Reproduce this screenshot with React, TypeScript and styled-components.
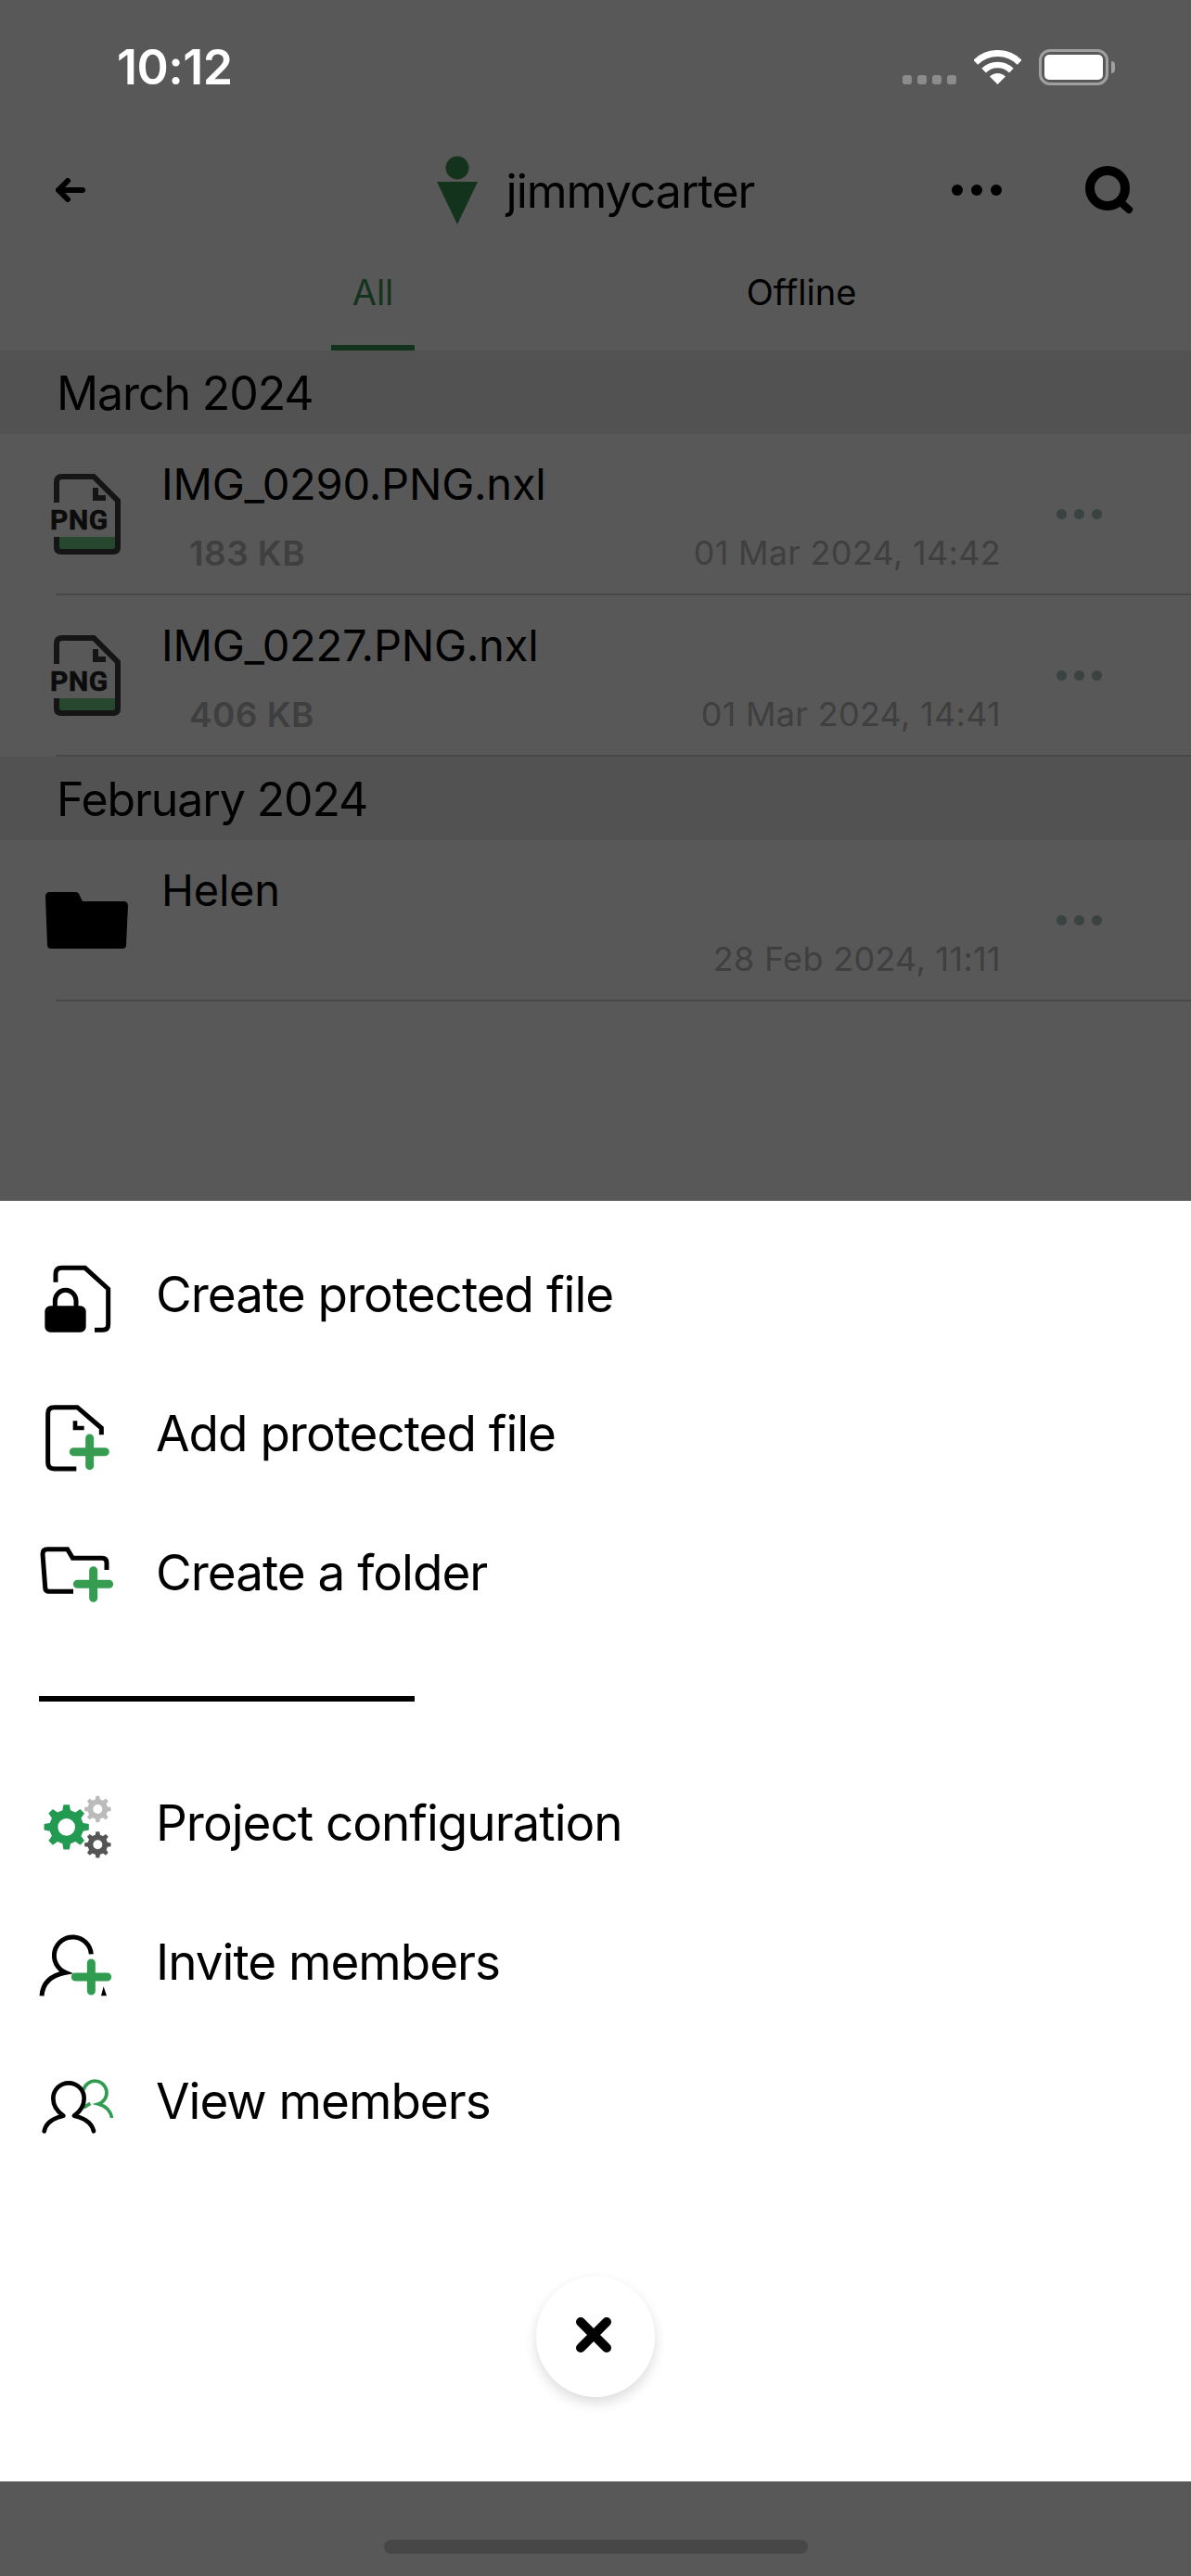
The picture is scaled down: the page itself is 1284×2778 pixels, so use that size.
import styled, { createGlobalStyle } from 'styled-components';

const GlobalStyle = createGlobalStyle`
  html, body {
    margin: 0;
    padding: 0;
    background: #585858;
  }
  * {
    box-sizing: border-box;
  }
`;

const fontStack = `Inter, "Liberation Sans", sans-serif`;

// builds a cog outline, the three gears only differ by centre and size
function gearPath(cx: number, cy: number, outer: number, hole: number) {
  const teeth = 8;
  const inner = outer * 0.76;
  const step = (Math.PI * 2) / teeth;
  let d = '';
  for (let i = 0; i < teeth; i++) {
    const a = i * step - Math.PI / 2;
    const pts: [number, number][] = [
      [inner, a - step * 0.3],
      [outer, a - step * 0.17],
      [outer, a + step * 0.17],
      [inner, a + step * 0.3],
    ];
    pts.forEach(([r, t]) => {
      d += `${d ? 'L' : 'M'}${(cx + r * Math.cos(t)).toFixed(1)} ${(cy + r * Math.sin(t)).toFixed(1)} `;
    });
  }
  d += 'Z ';
  d += `M${cx + hole} ${cy} A${hole} ${hole} 0 1 0 ${cx - hole} ${cy} A${hole} ${hole} 0 1 0 ${cx + hole} ${cy} Z`;
  return d;
}

const files = [
  {
    month: 'March 2024',
    rows: [
      { name: 'IMG_0290.PNG.nxl', size: '183 KB', date: '01 Mar 2024, 14:42', kind: 'png' },
      { name: 'IMG_0227.PNG.nxl', size: '406 KB', date: '01 Mar 2024, 14:41', kind: 'png' },
    ],
  },
  {
    month: 'February 2024',
    rows: [{ name: 'Helen', size: '', date: '28 Feb 2024, 11:11', kind: 'folder' }],
  },
];

const PngIcon = () => (
  <FileGlyph viewBox="54 0 76 87" width="76" height="87">
    <path d="M60 68 V80 Q60 84 64 84 H124 Q127 84 127 80 V68 Z" fill="#27472f" />
    <path
      d="M61 31 V9 Q61 3 67 3 H101 L127 29 V79 Q127 84 122 84 H66 Q61 84 61 79 V68"
      fill="none"
      stroke="#151515"
      strokeWidth="6"
    />
    <path d="M103 15 V26 H114" fill="none" stroke="#151515" strokeWidth="6" />
    <PngLabel x="54" y="60">PNG</PngLabel>
  </FileGlyph>
);

const FolderIcon = () => (
  <FolderGlyph viewBox="0 0 89 61" width="89" height="61">
    <path
      d="M0 5 Q0 0 5 0 H32 Q36 0 37 4 L40 10 H84 Q89 10 89 15 L87 57 Q87 61 83 61 H6 Q2 61 2 57 Z"
      fill="#000"
    />
  </FolderGlyph>
);

const menuTop = [
  {
    label: 'Create protected file',
    box: '90 18 300 300',
    art: (
      <>
        <path d="M180 128 V102 Q180 82 200 82 H275 L350 150 V265 Q350 283 332 283 H306" fill="none" stroke="#000" strokeWidth="15" />
        <path d="M178 212 V188 A34 34 0 0 1 246 188 V212" fill="none" stroke="#000" strokeWidth="15" />
        <rect x="145" y="205" width="133" height="85" rx="18" fill="#000" />
      </>
    ),
  },
  {
    label: 'Add protected file',
    box: '90 468 300 300',
    art: (
      <>
        <path d="M247 732 H175 Q155 732 155 712 V553 Q155 533 175 533 H250 L328 600 V622" fill="none" stroke="#000" strokeWidth="15" />
        <path d="M243 577 V600 H272" fill="none" stroke="#000" strokeWidth="14" />
        <path d="M290 633 V722 M238 677 H340" stroke="#359c50" strokeWidth="27" strokeLinecap="round" />
      </>
    ),
  },
  {
    label: 'Create a folder',
    box: '90 921 300 300',
    art: (
      <>
        <path d="M237 1132 H160 Q146 1132 146 1118 L138 1010 Q138 995 153 995 H218 L235 1024 H330 Q345 1024 345 1039 V1062" fill="none" stroke="#000" strokeWidth="15" />
        <path d="M302 1064 V1153 M250 1108 H353" stroke="#359c50" strokeWidth="27" strokeLinecap="round" />
      </>
    ),
  },
];

const menuBottom = [
  {
    label: 'Project configuration',
    box: '90 48 300 300',
    art: (
      <>
        <path d={gearPath(215, 211, 73, 28)} fill="#239a52" fillRule="evenodd" />
        <path d={gearPath(316, 153, 43, 15)} fill="#bbbbbb" fillRule="evenodd" />
        <path d={gearPath(316, 268, 43, 15)} fill="#555555" fillRule="evenodd" />
      </>
    ),
  },
  {
    label: 'Invite members',
    box: '90 498 300 300',
    art: (
      <>
        <path d="M295 622 A60 60 0 1 0 212 682 Q140 695 135 757" fill="none" stroke="#000" strokeWidth="15" />
        <path d="M327 757 L335 727 L345 757 Z" fill="#000" />
        <path d="M295 651 V741 M244 696 H347" stroke="#2f9c50" strokeWidth="27" strokeLinecap="round" />
      </>
    ),
  },
  {
    label: 'View members',
    box: '90 951 300 300',
    art: (
      <>
        <path d="M270 1065 A38 38 0 1 1 318 1110 Q355 1120 362 1155 M270 1122 L292 1108" fill="none" stroke="#2f9c50" strokeWidth="11" />
        <path d="M143 1198 Q150 1160 205 1148 Q172 1125 172 1092 A50 50 0 0 1 272 1092 Q272 1125 240 1148 Q295 1160 303 1198" fill="none" stroke="#000" strokeWidth="14" strokeLinecap="round" strokeLinejoin="round" />
      </>
    ),
  },
];

export default function App() {
  return (
    <>
      <GlobalStyle />
      <Screen>
        <StatusBar>
          <Clock>10:12</Clock>
          <StatusIcons>
            <SignalDots>
              <i /><i /><i /><i />
            </SignalDots>
            <svg width="51" height="37" viewBox="0 0 51 37">
              <path d="M1.8 13.3 A33.5 33.5 0 0 1 49.2 13.3" fill="none" stroke="#fff" strokeWidth="7" />
              <path d="M10.65 22.15 A21 21 0 0 1 40.35 22.15" fill="none" stroke="#fff" strokeWidth="6.5" />
              <path d="M25.5 37 L17 28.5 A12 12 0 0 1 34 28.5 Z" fill="#fff" />
            </svg>
            <Battery>
              <BatteryFill />
            </Battery>
          </StatusIcons>
        </StatusBar>

        <Header>
          <svg width="32" height="26" viewBox="0 0 32 26">
            <path d="M13 3 L3 13 L13 23 M3 13 H29" fill="none" stroke="#000" strokeWidth="6" strokeLinecap="round" strokeLinejoin="round" />
          </svg>
          <Title>
            <svg width="44" height="74" viewBox="0 0 44 74">
              <circle cx="22" cy="13" r="12.5" fill="#14331c" />
              <path d="M0 28 H44 L22 74 Z" fill="#14331c" />
            </svg>
            <UserName>jimmycarter</UserName>
          </Title>
          <HeaderActions>
            <Dots $size={12} $gap={9} $color="#000" />
            <svg width="54" height="52" viewBox="0 0 54 52">
              <circle cx="24" cy="24" r="19" fill="none" stroke="#000" strokeWidth="10" />
              <path d="M37 38 L47 47" stroke="#000" strokeWidth="8" strokeLinecap="round" />
            </svg>
          </HeaderActions>
        </Header>

        <Tabs>
          <Tab>
            <TabLabel $active>All</TabLabel>
          </Tab>
          <Tab>
            <TabLabel>Offline</TabLabel>
          </Tab>
        </Tabs>

        {files.map((group) => (
          <section key={group.month}>
            <MonthHeader>{group.month}</MonthHeader>
            {group.rows.map((row) => (
              <FileRow key={row.name}>
                {row.kind === 'png' ? <PngIcon /> : <FolderIcon />}
                <FileBody>
                  <FileName>{row.name}</FileName>
                  <FileMeta>
                    <FileSize>{row.size}</FileSize>
                    <FileDate>{row.date}</FileDate>
                  </FileMeta>
                </FileBody>
                <RowDots>
                  <Dots $size={11} $gap={8} $color="#3a4242" />
                </RowDots>
              </FileRow>
            ))}
          </section>
        ))}

        <Sheet>
          <MenuGroup>
            {menuTop.map((item) => (
              <MenuItem key={item.label}>
                <MenuIcon viewBox={item.box}>{item.art}</MenuIcon>
                {item.label}
              </MenuItem>
            ))}
          </MenuGroup>
          <SheetDivider />
          <MenuGroup>
            {menuBottom.map((item) => (
              <MenuItem key={item.label}>
                <MenuIcon viewBox={item.box}>{item.art}</MenuIcon>
                {item.label}
              </MenuItem>
            ))}
          </MenuGroup>
          <CloseButton>
            <CloseGlyph width="44" height="44" viewBox="0 0 44 44">
              <path d="M8 8 L36 36 M36 8 L8 36" stroke="#000" strokeWidth="10" strokeLinecap="round" />
            </CloseGlyph>
          </CloseButton>
        </Sheet>

        <HomeArea>
          <HomeBar />
        </HomeArea>
      </Screen>
    </>
  );
}

const Screen = styled.div`
  width: 1284px;
  height: 2778px;
  display: flex;
  flex-direction: column;
  background: #585858;
  font-family: ${fontStack};
  overflow: hidden;
`;

const StatusBar = styled.div`
  height: 150px;
  flex-shrink: 0;
  padding: 0 89px 5px 126px;
  display: flex;
  align-items: center;
  justify-content: space-between;
`;

const Clock = styled.span`
  color: #fff;
  font-size: 52px;
  font-weight: 600;
  letter-spacing: -0.5px;
`;

const StatusIcons = styled.div`
  display: flex;
  align-items: center;
  gap: 19px;
`;

const SignalDots = styled.div`
  display: flex;
  gap: 6px;
  align-self: flex-end;
  margin-bottom: 1px;
  i {
    display: block;
    width: 10px;
    height: 10px;
    border-radius: 3px;
    background: #8c8c8c;
  }
`;

const Battery = styled.div`
  width: 75px;
  height: 39px;
  padding: 3px;
  border: 3px solid #a0a0a0;
  border-radius: 12px;
  position: relative;
  &::after {
    content: '';
    position: absolute;
    right: -10px;
    top: 10px;
    width: 4px;
    height: 13px;
    border-radius: 0 6px 6px 0;
    background: #a0a0a0;
  }
`;

const BatteryFill = styled.div`
  height: 100%;
  border-radius: 5px;
  background: #fff;
`;

const Header = styled.div`
  height: 110px;
  flex-shrink: 0;
  padding: 0 60px;
  display: grid;
  grid-template-columns: 1fr auto 1fr;
  align-items: center;
`;

const Title = styled.div`
  display: flex;
  align-items: center;
  gap: 31px;
`;

const UserName = styled.span`
  color: #000;
  font-size: 50px;
  font-weight: 400;
  letter-spacing: -1px;
  margin-top: 2px;
`;

const HeaderActions = styled.div`
  display: flex;
  align-items: center;
  justify-content: flex-end;
  gap: 90px;
`;

const Dots = styled.span<{ $size: number; $gap: number; $color: string }>`
  display: block;
  width: ${(p) => p.$size}px;
  height: ${(p) => p.$size}px;
  border-radius: 50%;
  background: ${(p) => p.$color};
  margin: 0 ${(p) => p.$size + p.$gap}px;
  box-shadow:
    ${(p) => -(p.$size + p.$gap)}px 0 0 ${(p) => p.$color},
    ${(p) => p.$size + p.$gap}px 0 0 ${(p) => p.$color};
`;

const Tabs = styled.div`
  height: 118px;
  flex-shrink: 0;
  padding: 0 189px 0 171px;
  display: flex;
`;

const Tab = styled.div`
  flex: 1;
  display: flex;
  justify-content: center;
`;

const TabLabel = styled.span<{ $active?: boolean }>`
  height: 118px;
  padding: 32px 23px 0;
  font-size: 38px;
  line-height: 46px;
  color: ${(p) => (p.$active ? '#14331c' : '#000')};
  border-bottom: 6px solid ${(p) => (p.$active ? '#14331c' : 'transparent')};
`;

const MonthHeader = styled.div`
  height: 90px;
  padding: 1px 0 0 61px;
  display: flex;
  align-items: center;
  background: #525252;
  color: #000;
  font-size: 50px;
  letter-spacing: -1.1px;
`;

const FileRow = styled.div`
  height: 174px;
  margin-left: 60px;
  display: flex;
  align-items: center;
  border-bottom: 2px solid #484848;
`;

const FileGlyph = styled.svg`
  flex-shrink: 0;
  margin: 0 44px 0 -6px;
`;

const PngLabel = styled.text`
  font-family: Roboto, sans-serif;
  font-size: 30px;
  font-weight: 700;
  letter-spacing: 0.6px;
  fill: #0c0c0c;
  stroke: #0c0c0c;
  stroke-width: 0.6px;
`;

const FolderGlyph = styled.svg`
  flex-shrink: 0;
  margin: 0 36px 0 -11px;
`;

const FileBody = styled.div`
  flex: 1;
  align-self: stretch;
  padding-top: 26px;
`;

const FileName = styled.div`
  color: #000;
  font-size: 47px;
  line-height: 56px;
  height: 56px;
  letter-spacing: -0.2px;
`;

const FileMeta = styled.div`
  margin-top: 18px;
  height: 56px;
  display: flex;
  align-items: center;
  justify-content: space-between;
  padding-left: 30px;
`;

const FileSize = styled.span`
  color: #3f3f3f;
  font-size: 37px;
  font-weight: 600;
  letter-spacing: 0.4px;
`;

const FileDate = styled.span`
  color: #3f3f3f;
  font-size: 36px;
  letter-spacing: 0.3px;
  margin-right: -1px;
`;

const RowDots = styled.div`
  margin: 0 96px 0 60px;
  width: 50px;
  display: flex;
  justify-content: center;
`;

const Sheet = styled.div`
  height: 1381px;
  margin-top: auto;
  flex-shrink: 0;
  padding: 26px 0 0 30px;
  background: #fff;
  display: flex;
  flex-direction: column;
`;

const MenuGroup = styled.div`
  display: flex;
  flex-direction: column;
`;

const MenuItem = styled.div`
  height: 150px;
  display: flex;
  align-items: center;
  color: #000;
  font-size: 53px;
  letter-spacing: -1px;
`;

const MenuIcon = styled.svg`
  width: 100px;
  height: 100px;
  margin-right: 38px;
  flex-shrink: 0;
`;

const SheetDivider = styled.div`
  width: 405px;
  height: 6px;
  margin: 58px 0 56px 12px;
  background: #000;
`;

const CloseButton = styled.div`
  width: 128px;
  height: 130px;
  margin: 114px 0 0 548px;
  border-radius: 50%;
  background: #fff;
  box-shadow: 0 6px 14px rgba(0, 0, 0, 0.14);
  display: flex;
  align-items: center;
  justify-content: center;
`;

const CloseGlyph = styled.svg`
  margin: -4px 4px 0 0;
`;

const HomeArea = styled.div`
  height: 102px;
  flex-shrink: 0;
  padding-top: 63px;
  display: flex;
  justify-content: center;
`;

const HomeBar = styled.div`
  width: 457px;
  height: 15px;
  border-radius: 8px;
  background: #474747;
`;
